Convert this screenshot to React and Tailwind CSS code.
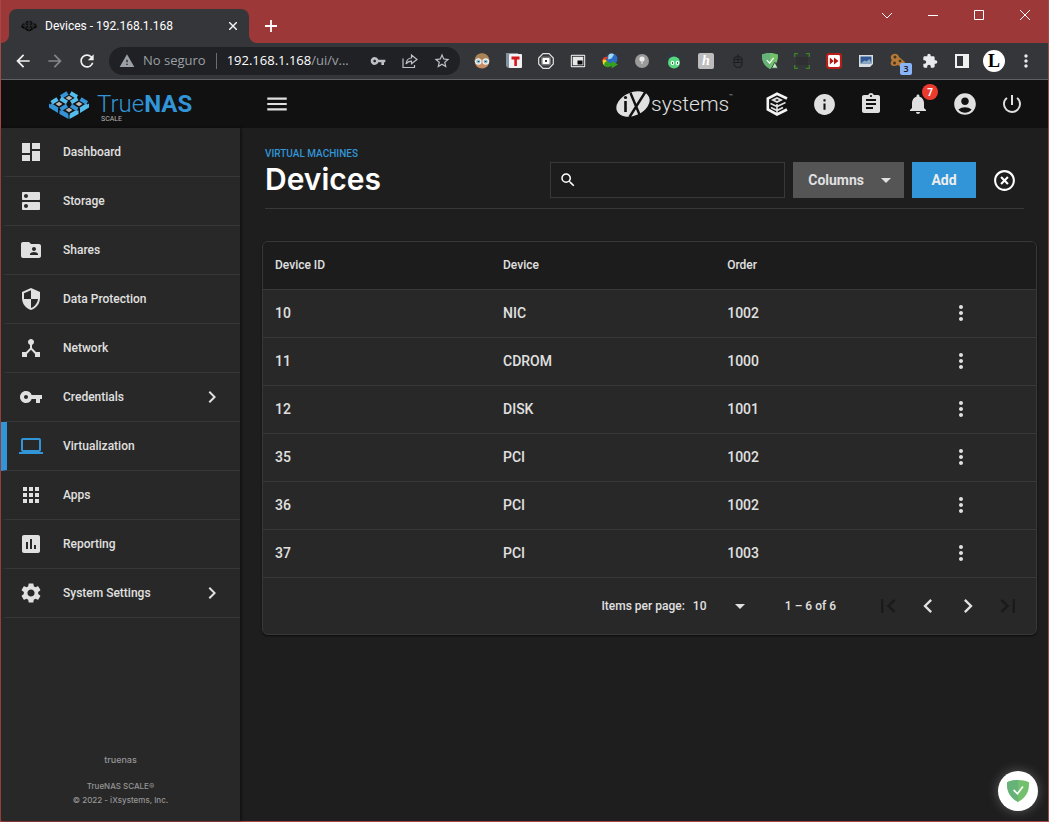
import { useState } from 'react'
import {
  MdAccountCircle, MdApps, MdArrowBack, MdArrowDropDown, MdArrowForward, MdAssessment, MdAssignment,
  MdChevronLeft, MdChevronRight, MdDashboard, MdDeviceHub, MdDns, MdExtension, MdFirstPage,
  MdFolderShared, MdHighlightOff, MdInfo, MdLaptop, MdLastPage, MdMenu, MdMoreVert, MdNotifications,
  MdPowerSettingsNew, MdRefresh, MdSearch, MdSecurity, MdSettings, MdStarBorder, MdVpnKey, MdWarning,
} from 'react-icons/md'

const NAV = [
  { label: 'Dashboard', icon: MdDashboard },
  { label: 'Storage', icon: MdDns },
  { label: 'Shares', icon: MdFolderShared },
  { label: 'Data Protection', icon: MdSecurity },
  { label: 'Network', icon: MdDeviceHub },
  { label: 'Credentials', icon: MdVpnKey, more: true },
  { label: 'Virtualization', icon: MdLaptop, active: true },
  { label: 'Apps', icon: MdApps },
  { label: 'Reporting', icon: MdAssessment },
  { label: 'System Settings', icon: MdSettings, more: true },
]

const DEVICES = [
  { id: 10, device: 'NIC', order: 1002 },
  { id: 11, device: 'CDROM', order: 1000 },
  { id: 12, device: 'DISK', order: 1001 },
  { id: 35, device: 'PCI', order: 1002 },
  { id: 36, device: 'PCI', order: 1002 },
  { id: 37, device: 'PCI', order: 1003 },
]

// Woven isometric mark: 12 bars around 4 small diamonds
const BARS = [
  ['M2.5 12.700 8.500 9', 1], ['M12 7 18.500 3', 0], ['M11.5 19.500 18 15.500', 0], ['M22 12.500 28.500 8.500', 1],
  ['M21.5 25.500 28.500 21.500', 1], ['M31.500 19.500 38.500 15', 1], ['M21.5 3 28 7', 1], ['M31.5 9 38 13', 0],
  ['M11.5 8.500 18 12.500', 1], ['M22 15.500 28.500 19.500', 0], ['M1.5 15 8.500 19.500', 0], ['M11.5 21.500 18.500 25.500', 0],
]

function Mark({ className, mono }) {
  return (
    <svg viewBox="0 0 40 29" className={className} fill="none" aria-hidden="true">
      {BARS.map(([d, light]) => (
        <path key={d} d={d} stroke={mono ? '#111' : light ? '#55bdee' : '#3594d8'} strokeWidth="4" />
      ))}
      <path d="M0 13.500v4l9 5.500v-4zM10.500 20v4l9 5v-4z" fill={mono ? '#0a0a0a' : '#3594d8'} />
      <path d="M40 13.500v4L31 23v-4zM29.500 20v4l-9 5v-4z" fill={mono ? '#0a0a0a' : '#55bdee'} />
      {[[20, 8], [10, 14], [30, 14], [20, 20]].map(([x, y]) => (
        <path key={`${x}-${y}`} d={`M${x - 3.5} ${y}l3.500-2.300 3.500 2.300-3.500 2.300z`} fill={mono ? '#222' : '#b5b5b5'} />
      ))}
    </svg>
  )
}

function Shield({ className, badge }) {
  return (
    <svg viewBox="0 0 20 20" className={className} aria-hidden="true">
      <path d="M10 0C6.500 0 3 .7 0 2c0 6 .3 12.500 10 18 9.700-5.500 10-12 10-18-3-1.300-6.500-2-10-2z" fill="#72c06c" />
      <path d="M10 0C6.500 0 3 .7 0 2c0 6 .3 12.500 10 18z" fill="#67b279" />
      <path d="M6 9 9.500 12.500 14.500 6" stroke="#fff" strokeWidth="1.500" fill="none" />
      {badge && <path d="M16 11.500 20 19h-8z" fill="#b9efc0" stroke="#35363a" />}
    </svg>
  )
}

function Svg({ children }) {
  return <svg viewBox="0 0 16 16" className="size-4" fill="none" aria-hidden="true">{children}</svg>
}

const EXTENSIONS = [
  {
    name: 'Tampermonkey',
    icon: (
      <Svg>
        <circle cx="8" cy="8" r="7.500" fill="#c98d65" />
        <path d="M.8 7C1.500 2 4 .5 8 .5s6.500 1.500 7.200 6.500L8 6z" fill="#a98256" />
        <circle cx="4.300" cy="8.500" r="2.700" fill="#8cc0d2" stroke="#f2f2f2" strokeWidth="1.200" />
        <circle cx="11.700" cy="8.500" r="2.700" fill="#8cc0d2" stroke="#f2f2f2" strokeWidth="1.200" />
        <path d="M3.800 8.500h1.500M10.800 8.500h1.500" stroke="#35363a" strokeWidth="1.200" />
      </Svg>
    ),
  },
  {
    name: 'Translator',
    icon: (
      <Svg>
        <path d="M0 0h12v15H2L0 13z" fill="#8093a5" />
        <rect x="3" y="1" width="13" height="14" rx="1" fill="#f1f1f3" />
        <path d="M5.500 3.500h8v3h-2.600V13H8.300V6.500H5.500z" fill="#d3151c" />
      </Svg>
    ),
  },
  {
    name: 'Recorder',
    icon: (
      <Svg>
        <path d="M5 .7h6L15.300 5v6L11 15.300H5L.7 11V5z" stroke="#e3e3e3" strokeWidth="1.200" />
        <rect x="3" y="3.500" width="10" height="9" rx="2" fill="#777" />
        <rect x="4.500" y="5" width="7" height="6" rx="1" fill="#fff" />
        <rect x="7" y="7" width="2" height="2" fill="#333" />
      </Svg>
    ),
  },
  {
    name: 'Picture in picture',
    icon: (
      <Svg>
        <rect x=".8" y="1.800" width="14.400" height="12.400" rx="1" fill="#e8e8e8" />
        <rect x="2.300" y="3.300" width="11.400" height="9.400" stroke="#202124" strokeWidth=".8" />
        <rect x="7.500" y="7.500" width="5" height="4" fill="#0b0b0b" />
      </Svg>
    ),
  },
  {
    name: 'Download manager',
    icon: (
      <Svg>
        <circle cx="10" cy="6" r="5.500" fill="#2c6cc4" />
        <path d="M6.500 2C8 .2 11 .3 12 1.500L9.500 5.500 6 6.500z" fill="#9fd8f0" />
        <path d="M0 8c1-4 4-5 6-3.500-2 1-2.500 3-1.500 5.500z" fill="#e53f2a" />
        <path d="M1 7c2-1.500 4 0 4.500 3L3 13C1 12 0 9 1 7z" fill="#f7d02c" />
        <path d="M2.500 13c-1-3 1-5 3-4.500.5 1 3 2 4.500 1.500V8l6 3.500L9.500 15.500 10 13c-3 1.500-6 1.500-7.500 0z" fill="#36a01f" />
      </Svg>
    ),
  },
  {
    name: 'Pin',
    icon: (
      <Svg>
        <circle cx="8" cy="8" r="7" fill="#9a9a9a" />
        <circle cx="8" cy="6" r="2.600" fill="#ededed" />
        <path d="M8 7v4" stroke="#ddd" strokeWidth="1.200" />
      </Svg>
    ),
  },
  {
    name: 'Bot',
    icon: (
      <Svg>
        <path d="M4.500 0 6 4M11.500 0 10 4M1 5l3 2M15 5l-3 2" stroke="#2c3b55" strokeWidth="1.500" />
        <circle cx="8" cy="9.500" r="6" fill="#54d77d" />
        <ellipse cx="6.500" cy="10" rx="1.800" ry="2.300" fill="#eefcf2" />
        <ellipse cx="11.500" cy="10" rx="1.800" ry="2.300" fill="#eefcf2" />
        <path d="M6.500 9v2M11.500 9v2" stroke="#2a7a48" />
      </Svg>
    ),
  },
  {
    name: 'Honey',
    icon: <span className="flex size-4 items-center justify-center rounded-xs bg-[#bcbcbc] font-['Liberation_Serif',serif] text-sm font-bold italic leading-none text-white">h</span>,
  },
  {
    name: 'Mouse',
    icon: (
      <Svg>
        <path d="M4 6.500h8V10c0 6-8 6-8 0zM8 1v8.500M4 9.500h8M4 6.500C4 4 6 3.500 8 3.500s4 .5 4 3" stroke="#1d1e20" strokeWidth="1.100" />
      </Svg>
    ),
  },
  { name: 'AdGuard', icon: <Shield badge className="size-4" /> },
  {
    name: 'Screenshot',
    icon: (
      <Svg>
        <rect x="2" y="4" width="12" height="8" fill="#303033" />
        <path d="M.7 4V.7H4M12 .7h3.300V4M15.300 12v3.300H12M4 15.300H.7V12" stroke="#3b8427" strokeWidth="1.300" />
      </Svg>
    ),
  },
  {
    name: 'Fast forward',
    icon: (
      <Svg>
        <rect x="1" y="1" width="14" height="14" rx="2.500" fill="#fff" stroke="#b91d18" strokeWidth="2.200" />
        <path d="m3.800 4.500 4 3.500-4 3.500zM8 4.500 12.500 8 8 11.500z" fill="#b3150f" />
      </Svg>
    ),
  },
  {
    name: 'Image viewer',
    icon: (
      <Svg>
        <path d="M1 2h14v9l-3 3H1z" fill="#d5dde3" />
        <path d="M2.500 3.500h11v7h-11z" fill="#315a94" />
        <path d="m2.500 10.500 4-3 2 1 3-2.500 2 4.500z" fill="#8ca9c4" />
      </Svg>
    ),
  },
  {
    name: 'Cookies',
    badge: '3',
    icon: (
      <Svg>
        <path d="M1 3c2-3 7-3 8 1l6 5-3 6-4-3c-7 3-9-2-6-4.500C1 6 .5 4.500 1 3z" fill="#b57a37" />
        <circle cx="5" cy="4" r="1.500" fill="#4b3319" />
        <circle cx="4.500" cy="10" r="1.500" fill="#4b3319" />
        <circle cx="10" cy="8" r="1.300" fill="#4b3319" />
      </Svg>
    ),
  },
  { name: 'Extensions', icon: <MdExtension className="size-4 text-[#e8eaed]" /> },
  {
    name: 'Side panel',
    icon: (
      <Svg>
        <rect x="2" y="2" width="12" height="12" stroke="#f1f1f1" strokeWidth="2" />
        <path d="M9 2h5v12H9z" fill="#f1f1f1" />
      </Svg>
    ),
  },
  {
    name: 'Profile',
    icon: <span className="flex size-[22px] items-center justify-center rounded-full bg-white font-['Liberation_Serif',serif] text-lg font-bold leading-none text-black">L</span>,
  },
  { name: 'Menu', icon: <MdMoreVert className="size-5 text-[#e8eaed]" /> },
]

function ToolButton({ label, children }) {
  return (
    <button aria-label={label} className="relative flex size-8 shrink-0 items-center justify-center">
      {children}
    </button>
  )
}

function TitleBar() {
  return (
    <div className="flex h-[43px] justify-between bg-[#9c3838] pl-2">
      <div className="flex items-end">
        <div className="relative flex h-[34px] w-60 items-center rounded-t-lg bg-[#35363a] pl-3 pr-2">
          <svg viewBox="0 0 8 8" className="absolute -left-2 bottom-0 size-2" fill="#35363a"><path d="M8 0v8H0a8 8 0 0 0 8-8z" /></svg>
          <svg viewBox="0 0 8 8" className="absolute -right-2 bottom-0 size-2" fill="#35363a"><path d="M0 0v8h8a8 8 0 0 1-8-8z" /></svg>
          <Mark mono className="w-4" />
          <span className="ml-2 flex-1 truncate text-xs text-white">Devices - 192.168.1.168</span>
          <button aria-label="Close tab" className="flex size-4 items-center justify-center">
            <svg viewBox="0 0 8 8" className="size-2" stroke="#f1f1f1" strokeWidth="1.500"><path d="m0 0 8 8M8 0 0 8" /></svg>
          </button>
        </div>
        <button aria-label="New tab" className="ml-2 flex h-[34px] w-7 items-center justify-center">
          <svg viewBox="0 0 12 12" className="size-3" stroke="#fff" strokeWidth="1.800"><path d="M6 0v12M0 6h12" /></svg>
        </button>
      </div>
      <div className="flex h-[30px] text-white">
        {[
          ['Search tabs', 'm0 3 5 5 5-5'],
          ['Minimize', 'M0 5.500h10'],
          ['Maximize', 'M.5.500h9v9h-9z'],
          ['Close', 'm0 0 10 10M10 0 0 10'],
        ].map(([label, d]) => (
          <button key={label} aria-label={label} className="flex w-[46px] items-center justify-center">
            <svg viewBox="0 0 10 10" className="size-[10px] overflow-visible" fill="none" stroke="currentColor"><path d={d} /></svg>
          </button>
        ))}
      </div>
    </div>
  )
}

function Toolbar() {
  return (
    <div className="flex h-[37px] items-center border-b border-[#5f6063] bg-[#35363a] px-1.5">
      <ToolButton label="Back"><MdArrowBack className="size-5 text-[#f1f1f1]" /></ToolButton>
      <ToolButton label="Forward"><MdArrowForward className="size-5 text-[#85868a]" /></ToolButton>
      <ToolButton label="Reload"><MdRefresh className="size-5 text-[#f1f1f1]" /></ToolButton>
      <div className="mx-1.5 flex h-7 min-w-0 flex-1 items-center rounded-full bg-[#202124] pl-2.5 pr-0.5 font-['Open_Sans',sans-serif] text-[13px] text-[#9aa0a6]">
        <MdWarning className="size-4 shrink-0" />
        <span className="ml-2 mr-2.5 whitespace-nowrap">No seguro</span>
        <span className="mr-2.5 h-4 w-px bg-[#6b6d70]" />
        <span className="flex-1 whitespace-nowrap"><span className="text-white">192.168.1.168</span>/ui/v...</span>
        <ToolButton label="Passwords"><MdVpnKey className="size-4 text-[#bdc1c6]" /></ToolButton>
        <ToolButton label="Share">
          <svg viewBox="0 0 16 16" className="size-4" fill="none" stroke="#bdc1c6" strokeWidth="1.200">
            <path d="M1 5.500v9h11.500V12M9.500 2v3C6 5 4.500 7.500 4 11c1.500-2 3-2.800 5.500-2.800v2.600L15 6.500z" />
          </svg>
        </ToolButton>
        <ToolButton label="Bookmark"><MdStarBorder className="size-[18px] text-[#bdc1c6]" /></ToolButton>
      </div>
      {EXTENSIONS.map(e => (
        <ToolButton key={e.name} label={e.name}>
          {e.icon}
          {e.badge && (
            <span className="absolute left-[18px] top-[18px] flex size-3 items-center justify-center rounded-xs bg-[#8ab4f8] font-['Noto_Sans',sans-serif] text-[9px] font-semibold text-[#202124]">{e.badge}</span>
          )}
        </ToolButton>
      ))}
    </div>
  )
}

function HeaderButton({ label, children }) {
  return (
    <button aria-label={label} className="relative flex size-10 items-center justify-center text-[#e0e0e0]">
      {children}
    </button>
  )
}

function Header() {
  return (
    <header className="flex h-12 items-center bg-[#111]">
      <div className="flex h-full w-[239px] shrink-0 items-center pl-12">
        <Mark className="w-10" />
        <div className="relative ml-2 text-2xl leading-6 text-[#3195d8]">
          <span className="font-light">True</span><span className="font-bold">NAS</span>
          <span className="absolute left-1 top-full text-[7px] leading-none text-[#b5b5b5]">SCALE</span>
        </div>
      </div>
      <button aria-label="Toggle menu" className="ml-6 text-[#e0e0e0]"><MdMenu className="size-[26px]" /></button>
      <div className="ml-auto flex items-center">
        <svg viewBox="0 0 36 28" className="h-7 w-9" aria-hidden="true">
          <ellipse cx="18" cy="14" rx="17.500" ry="11.500" transform="rotate(-24 18 14)" fill="#e0e0e0" />
          <path d="M15.500 3 25.500 27M31 1 14.500 27" stroke="#111" strokeWidth="2.400" />
          <path d="M10.500 11v11" stroke="#111" strokeWidth="2.600" />
          <circle cx="10.500" cy="7.500" r="1.600" fill="#111" />
        </svg>
        <span className="text-[21px] font-light leading-7 text-[#e0e0e0]">systems</span>
        <span className="self-start text-[6px] leading-3 text-[#bbb]">™</span>
      </div>
      <div className="ml-6 flex gap-[7px] pr-4">
        <HeaderButton label="TrueCommand">
          <svg viewBox="0 0 24 24" className="size-6" fill="none" aria-hidden="true">
            <path d="M22 6.500 12 1.800 2.800 6.500v11l9.200 5 10-5" stroke="#f5f5f5" strokeWidth="2.600" />
            <path d="m12 5 6 3-6 3-6-3z" fill="#e0e0e0" />
            <path d="m10 8 2-1 2 1-2 1z" fill="#111" />
            <path d="m5.500 11.500 6.500 3 8.500-4M6 15.500l6 3 6-3M12 12v9" stroke="#e0e0e0" strokeWidth="1.600" />
          </svg>
        </HeaderButton>
        <HeaderButton label="Status"><MdInfo className="size-[25px]" /></HeaderButton>
        <HeaderButton label="Jobs"><MdAssignment className="size-6" /></HeaderButton>
        <HeaderButton label="Alerts">
          <MdNotifications className="size-6" />
          <span className="absolute right-0 top-0 flex size-4 items-center justify-center rounded-full bg-[#eb3b2f] text-[10px] font-bold text-white">7</span>
        </HeaderButton>
        <HeaderButton label="Account"><MdAccountCircle className="size-[26px]" /></HeaderButton>
        <HeaderButton label="Power"><MdPowerSettingsNew className="size-6" /></HeaderButton>
      </div>
    </header>
  )
}

function Sidebar() {
  return (
    <aside className="flex w-[239px] shrink-0 flex-col bg-[#282828] shadow-[1px_0_3px_#0009]">
      <nav>
        {NAV.map(({ label, icon: Icon, more, active }) => (
          <a
            key={label}
            href="#"
            className={`flex h-[49px] items-center border-b border-b-[#383838] border-l-6 pl-3 pr-4 text-xs font-medium text-[#e0e0e0] ${active ? 'border-l-[#3195d8]' : 'border-l-transparent'}`}
          >
            <Icon className={`size-6 ${active ? 'text-[#3195d8]' : ''}`} />
            <span className="ml-5 flex-1">{label}</span>
            {more && <MdChevronRight className="size-6" />}
          </a>
        ))}
      </nav>
      <footer className="mt-auto pb-3.5 text-center font-['Inter',sans-serif] text-[8px] font-medium leading-[14px] text-[#969696]">
        <p className="mb-3 text-[9px]">truenas</p>
        <p>TrueNAS SCALE®</p>
        <p>© 2022 - iXsystems, Inc.</p>
      </footer>
    </aside>
  )
}

function DeviceTable() {
  return (
    <section className="overflow-hidden rounded-md border border-[#383838] bg-[#282828] shadow-[0_1px_2px_#000a]">
      <table className="w-full table-fixed border-separate border-spacing-0 text-left text-[#e0e0e0]">
        <thead className="bg-[#1c1c1c] text-xs">
          <tr className="h-12 *:border-b *:border-[#383838] *:pb-0.5">
            <th className="w-[29.5%] px-3 font-medium">Device ID</th>
            <th className="w-[29%] px-3 font-medium">Device</th>
            <th className="px-3 font-medium">Order</th>
            <th className="w-[150px]" aria-label="Actions" />
          </tr>
        </thead>
        <tbody className="text-sm font-medium">
          {DEVICES.map(d => (
            <tr key={d.id} className="h-12 *:border-b *:border-[#383838] *:pb-0.5">
              <td className="px-3">{d.id}</td>
              <td className="px-3">{d.device}</td>
              <td className="px-3">{d.order}</td>
              <td>
                <button aria-label={`Options for device ${d.id}`} className="mx-auto block"><MdMoreVert className="size-6" /></button>
              </td>
            </tr>
          ))}
        </tbody>
      </table>
      <div className="flex h-14 items-center justify-end pr-2 text-xs font-medium text-[#e0e0e0]">
        <label htmlFor="page-size">Items per page:</label>
        <div className="relative ml-2 w-14">
          <select id="page-size" className="w-full appearance-none bg-transparent pr-4">
            <option>10</option>
            <option>25</option>
            <option>50</option>
          </select>
          <MdArrowDropDown className="pointer-events-none absolute -right-[3px] top-1/2 size-6 -translate-y-1/2" />
        </div>
        <span className="ml-9 mr-8">1 – 6 of 6</span>
        <button disabled aria-label="First page" className="flex size-10 items-center justify-center text-[#1a1a1a]"><MdFirstPage className="size-7" /></button>
        <button aria-label="Previous page" className="flex size-10 items-center justify-center"><MdChevronLeft className="size-7" /></button>
        <button aria-label="Next page" className="flex size-10 items-center justify-center"><MdChevronRight className="size-7" /></button>
        <button disabled aria-label="Last page" className="flex size-10 items-center justify-center text-[#1a1a1a]"><MdLastPage className="size-7" /></button>
      </div>
    </section>
  )
}

export default function App() {
  const [filter, setFilter] = useState('')

  return (
    <div className="flex min-h-screen flex-col border border-[#a64646] bg-[#1e1e1e] font-['Roboto',sans-serif]">
      <div className="-mt-px">
        <TitleBar />
        <Toolbar />
      </div>
      <Header />
      <div className="flex flex-1">
        <Sidebar />
        <main className="min-w-0 flex-1 pb-12 pl-[22px] pr-[11px] pt-5">
          <div className="ml-[3px] mr-[13px] flex items-end gap-2 border-b border-[#383838] pb-2.5">
            <div className="flex-1">
              <a href="#" className="block text-[10px] font-medium leading-3 text-[#3195d8]">VIRTUAL MACHINES</a>
              <h1 className="pb-0.5 pt-0.5 font-['Inter',sans-serif] text-3xl font-semibold leading-[34px] text-white">Devices</h1>
            </div>
            <label className="flex h-9 w-[235px] items-center border border-[#383838] bg-[#1c1c1c] px-2">
              <MdSearch className="size-[18px] text-white" />
              <input
                aria-label="Search"
                value={filter}
                onChange={e => setFilter(e.target.value)}
                className="ml-2 min-w-0 flex-1 bg-transparent text-sm text-white outline-none"
              />
            </label>
            <button className="flex h-9 items-center bg-[#555] pl-[15px] pr-1.5 text-sm font-bold text-[#e0e0e0]">
              Columns
              <MdArrowDropDown className="ml-2.5 size-6" />
            </button>
            <button className="h-9 w-16 bg-[#3195d8] text-sm font-bold text-[#eee]">Add</button>
            <button aria-label="Close" className="flex h-9 w-10 items-center justify-center text-white"><MdHighlightOff className="size-[25px]" /></button>
          </div>
          <div className="mt-8">
            <DeviceTable />
          </div>
        </main>
      </div>
      <button aria-label="AdGuard assistant" className="fixed bottom-[11px] right-[11px] flex size-10 items-center justify-center rounded-full bg-white shadow-[0_0_12px_#fff4]">
        <Shield className="size-[22px]" />
      </button>
    </div>
  )
}
